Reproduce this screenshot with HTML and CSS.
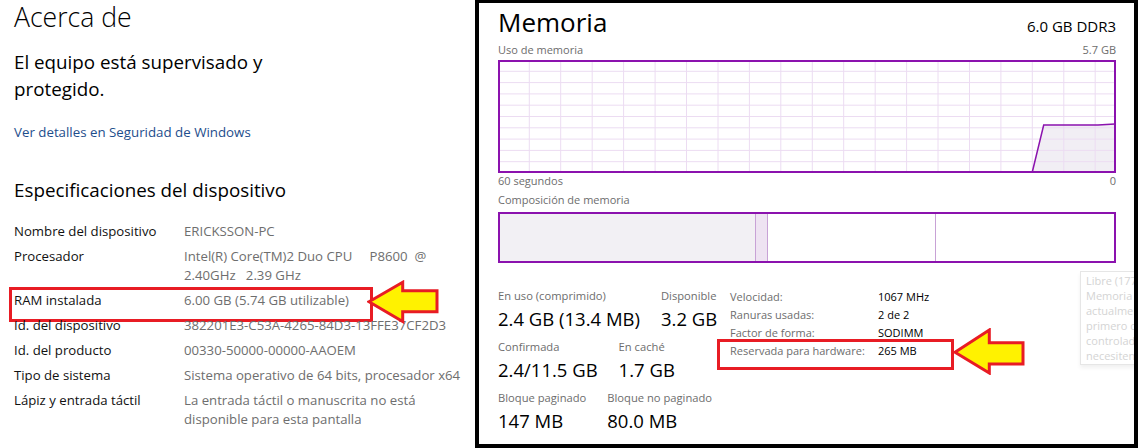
FILE: index.html
```html
<!DOCTYPE html>
<html lang="es">
<head>
<meta charset="utf-8">
<title>Acerca de / Memoria</title>
<link rel="stylesheet" href="styles.css">
</head>
<body>
<div class="page">
  <section class="about">
    <h1 class="about-title">Acerca de</h1>
    <p class="status">El equipo está supervisado y<br>protegido.</p>
    <a class="link" href="#">Ver detalles en Seguridad de Windows</a>
    <h2 class="spec-title">Especificaciones del dispositivo</h2>
    <div class="specs">
      <div class="spec-row"><div class="spec-label">Nombre del dispositivo</div><div class="spec-value">ERICKSSON-PC</div></div>
      <div class="spec-row"><div class="spec-label">Procesador</div><div class="spec-value pre">Intel(R) Core(TM)2 Duo CPU     P8600  @<br>2.40GHz   2.39 GHz</div></div>
      <div class="spec-row marked"><div class="spec-label">RAM instalada</div><div class="spec-value">6.00 GB (5.74 GB utilizable)</div></div>
      <div class="spec-row"><div class="spec-label">Id. del dispositivo</div><div class="spec-value">382201E3-C53A-4265-84D3-13FFE37CF2D3</div></div>
      <div class="spec-row"><div class="spec-label">Id. del producto</div><div class="spec-value">00330-50000-00000-AAOEM</div></div>
      <div class="spec-row"><div class="spec-label">Tipo de sistema</div><div class="spec-value">Sistema operativo de 64 bits, procesador x64</div></div>
      <div class="spec-row"><div class="spec-label">Lápiz y entrada táctil</div><div class="spec-value">La entrada táctil o manuscrita no está<br>disponible para esta pantalla</div></div>
    </div>
    <svg class="arrow arrow-left" width="72" height="44" viewBox="0 0 72 44">
      <polygon points="2,21.7 35.7,2.3 35.7,10.7 70,10.7 70,31.7 35.7,31.7 35.7,41.5" />
    </svg>
  </section>

  <section class="perf">
    <div class="perf-head">
      <div class="perf-title">Memoria</div>
      <div class="perf-kind">6.0 GB DDR3</div>
    </div>
    <div class="axis-row"><span>Uso de memoria</span><span>5.7 GB</span></div>
    <svg class="graph" width="618" height="113" viewBox="0 0 618 113">
      <polygon class="graph-fill" points="534.3,112 545.7,65 600,65 617,64 617,112" />
      <g class="grid">
        <line x1="0" y1="11.3" x2="618" y2="11.3"/><line x1="0" y1="22.6" x2="618" y2="22.6"/>
        <line x1="0" y1="33.9" x2="618" y2="33.9"/><line x1="0" y1="45.2" x2="618" y2="45.2"/>
        <line x1="0" y1="56.5" x2="618" y2="56.5"/><line x1="0" y1="67.8" x2="618" y2="67.8"/>
        <line x1="0" y1="79.1" x2="618" y2="79.1"/><line x1="0" y1="90.4" x2="618" y2="90.4"/>
        <line x1="0" y1="101.7" x2="618" y2="101.7"/>
        <line x1="31.3" y1="0" x2="31.3" y2="113"/><line x1="62.7" y1="0" x2="62.7" y2="113"/>
        <line x1="94.2" y1="0" x2="94.2" y2="113"/><line x1="125.6" y1="0" x2="125.6" y2="113"/>
        <line x1="157.1" y1="0" x2="157.1" y2="113"/><line x1="188.5" y1="0" x2="188.5" y2="113"/>
        <line x1="220" y1="0" x2="220" y2="113"/><line x1="251.4" y1="0" x2="251.4" y2="113"/>
        <line x1="282.8" y1="0" x2="282.8" y2="113"/><line x1="314.3" y1="0" x2="314.3" y2="113"/>
        <line x1="345.7" y1="0" x2="345.7" y2="113"/><line x1="377.2" y1="0" x2="377.2" y2="113"/>
        <line x1="408.6" y1="0" x2="408.6" y2="113"/><line x1="440" y1="0" x2="440" y2="113"/>
        <line x1="471.5" y1="0" x2="471.5" y2="113"/><line x1="502.9" y1="0" x2="502.9" y2="113"/>
        <line x1="534.3" y1="0" x2="534.3" y2="113"/><line x1="565.8" y1="0" x2="565.8" y2="113"/>
        <line x1="597.2" y1="0" x2="597.2" y2="113"/>
      </g>
      <polyline class="graph-line" points="534.3,112 545.7,65 600,65 617,64" />
      <rect class="graph-frame" x="1" y="1" width="616" height="111" />
    </svg>
    <div class="axis-row axis-bottom"><span>60 segundos</span><span>0</span></div>
    <div class="axis-row comp-label"><span>Composición de memoria</span></div>
    <div class="comp">
      <div class="comp-inuse"></div>
      <div class="comp-mod"></div>
      <div class="comp-standby"></div>
      <div class="comp-free"></div>
    </div>

    <div class="bottom">
      <div class="stats">
        <div class="stat-row">
          <div class="stat"><div class="stat-label">En uso (comprimido)</div><div class="stat-value">2.4 GB (13.4 MB)</div></div>
          <div class="stat"><div class="stat-label">Disponible</div><div class="stat-value">3.2 GB</div></div>
        </div>
        <div class="stat-row">
          <div class="stat"><div class="stat-label">Confirmada</div><div class="stat-value">2.4/11.5 GB</div></div>
          <div class="stat"><div class="stat-label">En caché</div><div class="stat-value">1.7 GB</div></div>
        </div>
        <div class="stat-row">
          <div class="stat"><div class="stat-label">Bloque paginado</div><div class="stat-value">147 MB</div></div>
          <div class="stat"><div class="stat-label">Bloque no paginado</div><div class="stat-value">80.0 MB</div></div>
        </div>
      </div>
      <div class="details">
        <div class="detail-row"><span class="detail-label">Velocidad:</span><span class="detail-value">1067 MHz</span></div>
        <div class="detail-row"><span class="detail-label">Ranuras usadas:</span><span class="detail-value">2 de 2</span></div>
        <div class="detail-row"><span class="detail-label">Factor de forma:</span><span class="detail-value">SODIMM</span></div>
        <div class="detail-row marked-detail"><span class="detail-label">Reservada para hardware:</span><span class="detail-value">265 MB</span></div>
      </div>
    </div>

    <div class="tooltip">
      <div>Libre (1778 MB)</div>
      <div>Memoria que no se usa</div>
      <div>actualmente y que se usará</div>
      <div>primero cuando los procesos,</div>
      <div>controladores o el sistema</div>
      <div>necesiten más memoria.</div>
    </div>

    <svg class="arrow arrow-right" width="72" height="47" viewBox="0 0 72 47">
      <polygon points="2,24.3 36.3,2 36.3,14.7 70,14.7 70,36 36.3,36 36.3,45" />
    </svg>
  </section>
</div>
</body>
</html>
```

FILE: styles.css
```css
* { box-sizing: border-box; }

html, body {
  margin: 0;
  padding: 0;
  background: #ffffff;
}

body {
  font-family: "Open Sans", "Noto Sans", sans-serif;
  color: #000;
  width: 1138px;
  height: 448px;
  overflow: hidden;
}

.page {
  display: flex;
  width: 1138px;
  height: 448px;
}

/* ---------- Acerca de ---------- */
.about {
  position: relative;
  width: 475px;
  flex: 0 0 475px;
  padding-left: 14px;
}

.about-title {
  margin: 0;
  font-size: 26.6px;
  font-weight: 300;
  line-height: 34px;
  color: #000;
}

.status {
  margin: 15px 0 0 0;
  font-size: 18.8px;
  line-height: 27px;
  font-weight: 400;
  color: #000;
}

.link {
  display: block;
  margin-top: 20px;
  font-size: 13.3px;
  line-height: 18px;
  color: #1e4e8c;
  text-decoration: none;
}

.spec-title {
  margin: 37px 0 0 0;
  font-size: 18.8px;
  line-height: 24px;
  font-weight: 400;
  color: #000;
}

.specs {
  margin-top: 20px;
  display: flex;
  flex-direction: column;
  gap: 6px;
}

.spec-row {
  position: relative;
  display: flex;
  font-size: 13.2px;
  line-height: 19px;
}

.spec-label {
  width: 170px;
  flex: 0 0 170px;
  color: #111;
}

.spec-value {
  color: #6e6e6e;
}

.spec-value.pre {
  white-space: pre;
}

.spec-row.marked::after {
  content: "";
  position: absolute;
  left: -5.5px;
  top: -4px;
  width: 358px;
  height: 29px;
  border: 3px solid #e81c24;
}

.arrow {
  position: absolute;
}

.arrow polygon {
  fill: #fff200;
  stroke: #e81c24;
  stroke-width: 3;
  stroke-linejoin: miter;
}

.arrow-left {
  left: 367px;
  top: 280px;
}

/* ---------- Memoria ---------- */
.perf {
  position: relative;
  flex: 1 1 auto;
  height: 448px;
  border-style: solid;
  border-color: #000;
  border-width: 3px 4px 4px 4px;
  padding: 0 18px 0 19px;
  overflow: hidden;
}

.perf-head {
  display: flex;
  justify-content: space-between;
  align-items: baseline;
  margin-top: 2px;
  height: 34px;
}

.perf-title {
  font-size: 26px;
  line-height: 34px;
  font-weight: 400;
}

.perf-kind {
  font-size: 15px;
  line-height: 34px;
}

.axis-row {
  display: flex;
  justify-content: space-between;
  font-size: 11px;
  line-height: 14px;
  color: #6d6d6d;
  margin-top: 4px;
}

.graph {
  display: block;
  margin-top: 3px;
}

.graph-fill { fill: #f1eef4; }
.grid line { stroke: #ecdcf2; stroke-width: 1; }
.graph-line { fill: none; stroke: #8b12ae; stroke-width: 1.5; }
.graph-frame { fill: none; stroke: #8b12ae; stroke-width: 2; }

.axis-bottom { margin-top: 1px; }
.comp-label { margin-top: 5px; }

.comp {
  display: flex;
  margin-top: 5px;
  height: 51px;
  border: 2px solid #8b12ae;
}

.comp-inuse {
  width: 256px;
  background: #f2f0f4;
  border-right: 1px solid #c8a2d6;
}

.comp-mod {
  width: 12px;
  background: #eee3f2;
  border-right: 1px solid #c8a2d6;
}

.comp-standby {
  width: 168px;
  border-right: 1px solid #c8a2d6;
}

.comp-free { flex: 1; }

.bottom {
  display: flex;
  align-items: flex-start;
  margin-top: 25px;
}

.stats {
  width: 232px;
  flex: 0 0 232px;
  display: flex;
  flex-direction: column;
  gap: 8px;
}

.stat-row {
  display: flex;
  gap: 21px;
}

.stat-label {
  font-size: 11.2px;
  line-height: 15px;
  color: #6d6d6d;
}

.stat-value {
  margin-top: 3px;
  font-size: 18.5px;
  line-height: 25px;
  color: #000;
  white-space: nowrap;
}

.details {
  margin-top: 0;
  font-size: 11px;
  line-height: 18px;
}

.detail-row {
  position: relative;
  display: flex;
}

.detail-label {
  width: 148px;
  flex: 0 0 148px;
  color: #6d6d6d;
}

.detail-value {
  color: #000;
}

.marked-detail::after {
  content: "";
  position: absolute;
  left: -13px;
  top: -3px;
  width: 231px;
  height: 25px;
  border: 3px solid #e81c24;
}

.tooltip {
  position: absolute;
  left: 601px;
  top: 268px;
  width: 160px;
  padding: 1px 5px;
  border: 1px solid #e6e6e6;
  background: #fff;
  box-shadow: 0 3px 4px rgba(0, 0, 0, 0.06);
  font-size: 11px;
  line-height: 15px;
  color: #d4d4d4;
  white-space: nowrap;
}

.arrow-right {
  left: 474px;
  top: 325px;
}
```
